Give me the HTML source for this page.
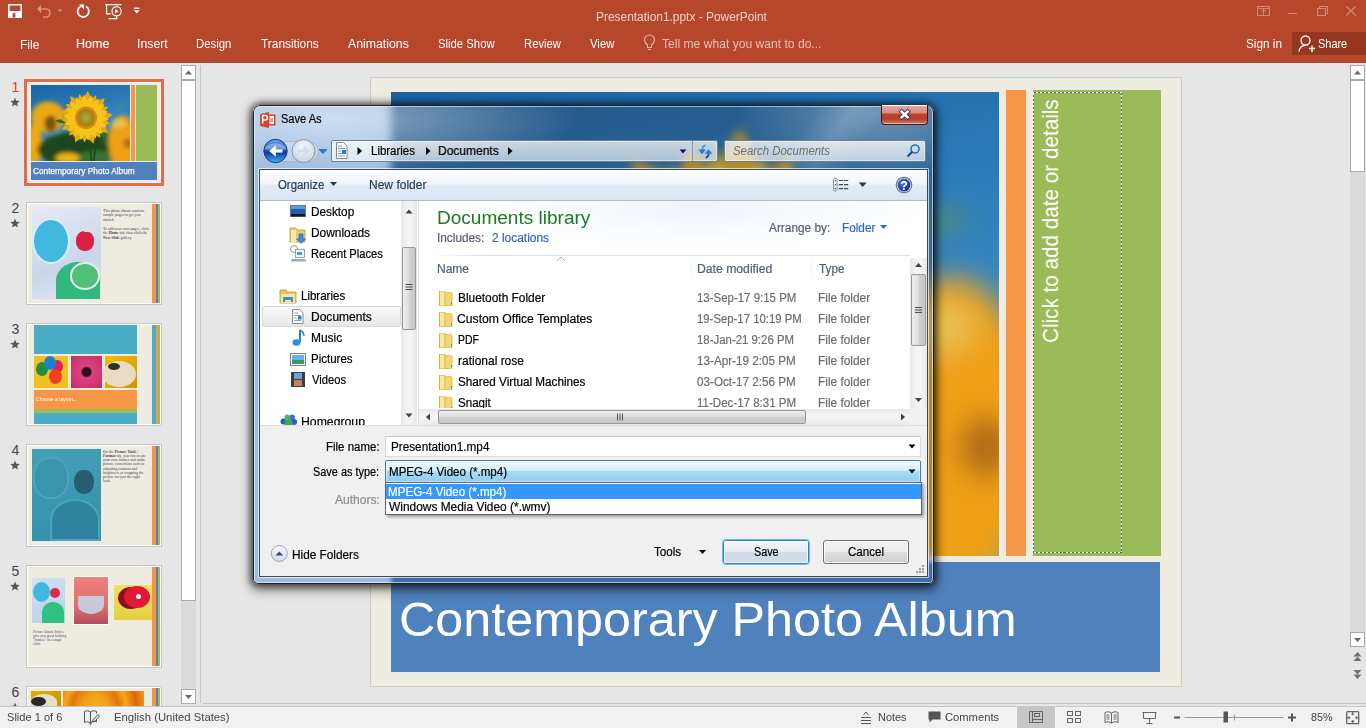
<!DOCTYPE html>
<html><head><meta charset="utf-8">
<style>
*{margin:0;padding:0;box-sizing:border-box}
html,body{width:1366px;height:728px;overflow:hidden;background:#e6e6e6;font-family:"Liberation Sans",sans-serif;position:relative}
.a{position:absolute}
.t{position:absolute;white-space:nowrap;line-height:1;transform-origin:0 0}
svg{position:absolute;overflow:visible}
#title{left:0;top:0;width:1366px;height:63px;background:#b7472a}
.tab{color:#fff;font-size:12.5px;top:37.6px}
.dt{font-size:12px;color:#000;-webkit-text-stroke:.2px currentColor}
</style></head><body>
<!-- TITLE BAR -->
<div id="title" class="a">
  <!-- QAT -->
  <svg style="left:0;top:0" width="150" height="24">
    <g fill="none" stroke="#fff" stroke-width="1.6">
      <path d="M8.8 4.8h12.4v12.4H8.8z"/>
    </g>
    <rect x="9" y="11" width="12" height="6.5" fill="#fff"/>
    <rect x="12.6" y="13.2" width="2.8" height="4.4" fill="#b7472a"/>
    <g fill="none" stroke="#d9907d" stroke-width="1.6">
      <path d="M39 9h7a4 4 0 0 1 0 8h-3"/>
    </g>
    <path d="M37 9l4-4v8z" fill="#d9907d"/>
    <path d="M57.5 9.5h5l-2.5 2.5z" fill="#d9907d"/>
    <g fill="none" stroke="#fff" stroke-width="1.8">
      <path d="M80.5 6.5a5.6 5.6 0 1 0 5.5 0"/>
    </g>
    <path d="M79 4.5h5v5z" fill="#fff"/>
    <g fill="none" stroke="#fff" stroke-width="1.2">
      <path d="M105 4.6h16.5M106.6 4.6v9.2h4.2"/>
      <circle cx="116.6" cy="11.3" r="4.6"/>
      <path d="M116.6 15.9v2.6M108.5 18.6h9"/>
    </g>
    <path d="M115.2 9l3.4 2.3-3.4 2.3z" fill="#fff"/>
    <rect x="134" y="7.6" width="5.4" height="1.3" fill="#fff"/><path d="M133.8 10.3h5.8l-2.9 3.3z" fill="#fff"/>
  </svg>
  <div class="t" style="left:596.35px;top:11px;font-size:12.5px;color:#f0d5ce;transform:scaleX(0.9534)">Presentation1.pptx - PowerPoint</div>
  <!-- window controls -->
  <svg style="left:1250px;top:0" width="116" height="24">
    <g fill="none" stroke="#d28a76" stroke-width="1">
      <rect x="7.5" y="6.5" width="12" height="9"/>
      <path d="M7.5 8.5h12M13.5 9.5v6M11.5 11.5l2-2 2 2"/>
      <path d="M38 13.5h9"/>
      <rect x="67.5" y="8.5" width="8" height="7"/>
      <path d="M69.5 8.5v-2h8v7h-2"/>
      <path d="M96.5 6.5l9 9M105.5 6.5l-9 9" stroke-width="1.3"/>
    </g>
  </svg>
  <div class="t tab" style="left:20.00px;top:39.4px;transform:scaleX(0.9600)">File</div>
  <div class="t tab" style="left:76.00px;transform:scaleX(1.0000)">Home</div>
  <div class="t tab" style="left:136.52px;transform:scaleX(0.9833)">Insert</div>
  <div class="t tab" style="left:196.00px;transform:scaleX(0.9103)">Design</div>
  <div class="t tab" style="left:261.00px;transform:scaleX(0.9508)">Transitions</div>
  <div class="t tab" style="left:348.00px;transform:scaleX(0.9839)">Animations</div>
  <div class="t tab" style="left:438.00px;transform:scaleX(0.9048)">Slide Show</div>
  <div class="t tab" style="left:524.00px;transform:scaleX(0.9024)">Review</div>
  <div class="t tab" style="left:590.00px;transform:scaleX(0.9074)">View</div>
  <svg style="left:640px;top:34px" width="20" height="20">
    <g fill="none" stroke="#e5b9ad" stroke-width="1.1">
      <path d="M7.5 13.5v-2.5c-2-1.5-3-3-3-5a5 5 0 0 1 10 0c0 2-1 3.5-3 5v2.5z"/>
      <path d="M8 15.5h3"/>
    </g>
  </svg>
  <div class="t tab" style="left:661.90px;color:#e8c2b8;transform:scaleX(0.9683)">Tell me what you want to do...</div>
  <div class="t tab" style="left:1245.90px;transform:scaleX(0.9395)">Sign in</div>
  <div class="a" style="left:1292px;top:32px;width:74px;height:23px;background:#953621"></div>
  <svg style="left:1298px;top:35px" width="18" height="18">
    <g fill="none" stroke="#fff" stroke-width="1.3">
      <circle cx="7.5" cy="5.5" r="4.5"/>
      <path d="M1 16.5c0.5-4 3-6 6.5-6.2"/>
      <path d="M11 13.5h6M14 10.5v6.5"/>
    </g>
  </svg>
  <div class="t tab" style="left:1318.10px;transform:scaleX(0.8758)">Share</div>
</div>
<!-- LEFT PANEL -->
<div class="a" style="left:181px;top:65px;width:15px;height:639px;background:#dadada"></div>
<div class="a" style="left:181px;top:65px;width:15px;height:15px;background:#fff;border:1px solid #ababab"></div>
<svg style="left:181px;top:65px" width="15" height="15"><path d="M4 9.5h7l-3.5-4z" fill="#666"/></svg>
<div class="a" style="left:181px;top:80px;width:15px;height:521px;background:#fff;border:1px solid #ababab"></div>
<div class="a" style="left:181px;top:689px;width:15px;height:15px;background:#fff;border:1px solid #ababab"></div>
<svg style="left:181px;top:689px" width="15" height="15"><path d="M4 6h7l-3.5 4z" fill="#666"/></svg>
<div class="a" style="left:203px;top:703px;width:1163px;height:1px;background:#c8c8c8"></div>
<!-- numbers -->
<div class="t" style="left:11.5px;top:80px;font-size:14px;color:#d24726">1</div>
<div class="t" style="left:11.5px;top:201px;font-size:14px;color:#444">2</div>
<div class="t" style="left:11.5px;top:322px;font-size:14px;color:#444">3</div>
<div class="t" style="left:11.5px;top:443px;font-size:14px;color:#444">4</div>
<div class="t" style="left:11.5px;top:564px;font-size:14px;color:#444">5</div>
<div class="t" style="left:11.5px;top:685px;font-size:14px;color:#444">6</div>
<svg style="left:0;top:0" width="30" height="728">
  <g fill="#555">
    <path id="star" d="M15 97.5l1.3 3.3 3.5 0.2-2.7 2.2 0.9 3.4-3-1.9-3 1.9 0.9-3.4-2.7-2.2 3.5-0.2z"/>
    <use href="#star" y="121"/><use href="#star" y="242"/><use href="#star" y="363"/><use href="#star" y="484"/><use href="#star" y="605"/>
  </g>
</svg>
<!-- thumb 1 -->
<div class="a" style="left:24px;top:79px;width:140px;height:107px;border:3px solid #e8694a;background:#fff"></div>
<div class="a" style="left:28px;top:83px;width:132px;height:99px;background:#eeece1"></div>
<svg style="left:31px;top:85px" width="99" height="76" viewBox="0 0 608 464" preserveAspectRatio="none"><use href="#photo"/></svg>
<div class="a" style="left:131px;top:85px;width:4px;height:76px;background:#f79646"></div>
<div class="a" style="left:136px;top:85px;width:21px;height:76px;background:#9bbb59"></div>
<div class="a" style="left:31px;top:162px;width:126px;height:18px;background:#4f81bd"></div>
<div class="t" style="left:33px;top:167px;font-size:9px;color:#fff;-webkit-text-stroke:.25px #fff;transform:scaleX(0.92)">Contemporary Photo Album</div>
<!-- thumb 2 -->
<div class="a" style="left:26px;top:202px;width:136px;height:103px;border:1px solid #c6c6c6;background:#fff"></div>
<div class="a" style="left:28px;top:204px;width:132px;height:99px;background:#eeece1"></div>
<div class="a" style="left:32px;top:207px;width:69px;height:92px;background:linear-gradient(160deg,#e6eaf4,#c9d6ea 60%,#dfe6f1)"></div>
<div class="a" style="left:32px;top:218px;width:38px;height:46px;border-radius:50%;border:2px solid #d8eef8;background:#40b8e0;filter:blur(.7px)"></div>
<div class="a" style="left:76px;top:231px;width:18px;height:20px;border-radius:45%;background:#d82040;filter:blur(.6px)"></div><div class="a" style="left:84px;top:220px;width:8px;height:12px;border:1.5px solid #e8d8e0;filter:blur(.4px)"></div>
<div class="a" style="left:56px;top:262px;width:44px;height:37px;border-radius:50% 50% 0 0;background:#30b880;filter:blur(.7px)"></div>
<div class="a" style="left:70px;top:262px;width:30px;height:28px;border-radius:50%;border:2.5px solid #e0ece8;background:#50c078;filter:blur(.5px)"></div>
<div class="a" style="left:103px;top:208.5px;font-family:'Liberation Serif',serif;font-size:3.9px;line-height:4.5px;color:#4a4058;white-space:nowrap">This photo album contains<br>sample pages to get you<br>started.<br><br style="line-height:6px">To add your own pages, click<br>the <b>Home</b> tab, then click the<br><b>New Slide</b> gallery.</div>
<div class="a" style="left:152px;top:204px;width:4px;height:99px;background:#f79646"></div>
<div class="a" style="left:156px;top:204px;width:2px;height:99px;background:#4f81bd"></div>
<div class="a" style="left:158px;top:204px;width:2px;height:99px;background:#9bbb59"></div>
<!-- thumb 3 -->
<div class="a" style="left:26px;top:323px;width:136px;height:103px;border:1px solid #c6c6c6;background:#fff"></div>
<div class="a" style="left:28px;top:325px;width:132px;height:99px;background:#eeece1"></div>
<div class="a" style="left:34px;top:325px;width:103px;height:29px;background:#4bacc6"></div>
<div class="a" style="left:34px;top:356px;width:34px;height:32px;background:#f0c020"></div>
<div class="a" style="left:52px;top:360px;width:11px;height:13px;border-radius:50%;background:#e02050"></div><div class="a" style="left:36px;top:362px;width:12px;height:14px;border-radius:50%;background:#209040"></div>
<div class="a" style="left:44px;top:356px;width:12px;height:14px;border-radius:50%;background:#2080d0"></div>
<div class="a" style="left:49px;top:369px;width:13px;height:15px;border-radius:50%;background:#f04020"></div>
<div class="a" style="left:71px;top:356px;width:31px;height:32px;background:radial-gradient(circle at 50% 50%,#301018 0,#301018 4px,#e04080 6px,#c03068 100%)"></div>
<div class="a" style="left:105px;top:356px;width:32px;height:32px;background:linear-gradient(135deg,#f0c000,#d89000)"></div>
<div class="a" style="left:102px;top:361px;width:34px;height:26px;border-radius:50%;background:#e8dcc0"></div>
<div class="a" style="left:108px;top:363px;width:12px;height:7px;border-radius:50%;background:#303030"></div>
<div class="a" style="left:34px;top:390px;width:103px;height:19px;background:#f79646"></div>
<div class="t" style="left:35.8px;top:395.5px;font-size:6px;color:#fff;transform:scaleX(.85)">Choose a layout...</div>
<div class="a" style="left:37px;top:410.5px;width:62px;height:1px;background:rgba(255,255,255,.6)"></div>
<div class="a" style="left:34px;top:409px;width:103px;height:4px;background:#9bbb59"></div>
<div class="a" style="left:34px;top:413px;width:103px;height:11px;background:#4bacc6"></div>
<div class="a" style="left:152px;top:325px;width:4px;height:99px;background:#4bacc6"></div>
<div class="a" style="left:156px;top:325px;width:2px;height:99px;background:#f79646"></div>
<div class="a" style="left:158px;top:325px;width:2px;height:99px;background:#9bbb59"></div>
<!-- thumb 4 -->
<div class="a" style="left:26px;top:444px;width:136px;height:103px;border:1px solid #c6c6c6;background:#fff"></div>
<div class="a" style="left:28px;top:446px;width:132px;height:99px;background:#eeece1"></div>
<div class="a" style="left:32px;top:449px;width:69px;height:92px;background:linear-gradient(170deg,#44a0b8,#3a98b0 50%,#3090a8)"></div>
<div class="a" style="left:33px;top:457px;width:36px;height:42px;border-radius:45%;border:2px solid #4aa4bc;background:#3a94ac;filter:blur(.6px)"></div>
<div class="a" style="left:74px;top:470px;width:20px;height:24px;border-radius:45%;background:#245e70;filter:blur(.6px)"></div>
<div class="a" style="left:50px;top:499px;width:50px;height:42px;border-radius:50% 50% 0 0;border:2px solid #4aa4bc;background:#2e84a0;filter:blur(.6px)"></div>
<div class="a" style="left:103px;top:450px;font-family:'Liberation Serif',serif;font-size:3.9px;line-height:4.15px;color:#4a4058;white-space:nowrap">On the <b>Picture Tools</b> |<br><b>Format</b> tab, you can create<br>your own frames and make<br>picture corrections such as<br>adjusting contrast and<br>brightness or cropping the<br>picture for just the right<br>look.</div>
<div class="a" style="left:152px;top:446px;width:4px;height:99px;background:#f79646"></div>
<div class="a" style="left:156px;top:446px;width:2px;height:99px;background:#4f81bd"></div>
<div class="a" style="left:158px;top:446px;width:2px;height:99px;background:#9bbb59"></div>
<!-- thumb 5 -->
<div class="a" style="left:26px;top:565px;width:136px;height:103px;border:1px solid #c6c6c6;background:#fff"></div>
<div class="a" style="left:28px;top:567px;width:132px;height:99px;background:#eeece1"></div>
<div class="a" style="left:32px;top:578px;width:33px;height:45px;background:linear-gradient(160deg,#d0e0f0,#b8d0e8)"></div>
<div class="a" style="left:33px;top:582px;width:17px;height:20px;border-radius:50%;background:#40b8e0"></div>
<div class="a" style="left:50px;top:588px;width:10px;height:10px;border-radius:50%;background:#e02848"></div>
<div class="a" style="left:42px;top:602px;width:22px;height:21px;border-radius:50% 50% 0 0;background:#30c080"></div>
<div class="a" style="left:73px;top:576px;width:36px;height:49px;background:#fff"></div>
<div class="a" style="left:74px;top:577px;width:34px;height:47px;background:linear-gradient(#f08080,#e07070 60%,#b05060)"></div>
<div class="a" style="left:78px;top:596px;width:26px;height:18px;border-radius:0 0 50% 50%;background:#c8c8d8"></div>
<div class="a" style="left:114px;top:585px;width:38px;height:35px;background:linear-gradient(#f0e060,#e0d040)"></div>
<div class="a" style="left:118px;top:587px;width:26px;height:22px;border-radius:50%;background:#8a1020"></div>
<div class="a" style="left:124px;top:586px;width:26px;height:22px;border-radius:50%;background:#e01838"></div>
<div class="a" style="left:136px;top:594px;width:5px;height:5px;border-radius:50%;background:#f0f0f0"></div>
<div class="a" style="left:33px;top:629.5px;font-family:'Liberation Serif',serif;font-size:3.7px;line-height:4.3px;color:#4a4870;white-space:nowrap">Picture Quick Styles<br>give you great looking<br>"frames" in a single<br>click.</div>
<div class="a" style="left:152px;top:567px;width:4px;height:99px;background:#f79646"></div>
<div class="a" style="left:156px;top:567px;width:2px;height:99px;background:#4f81bd"></div>
<div class="a" style="left:158px;top:567px;width:2px;height:99px;background:#9bbb59"></div>
<!-- thumb 6 -->
<div class="a" style="left:26px;top:686px;width:136px;height:30px;border:1px solid #c6c6c6;background:#fff"></div>
<div class="a" style="left:28px;top:688px;width:132px;height:28px;background:#eeece1"></div>
<div class="a" style="left:31px;top:691px;width:30px;height:20px;background:linear-gradient(135deg,#e0b000,#c89000)"></div>
<div class="a" style="left:31px;top:694px;width:26px;height:16px;border-radius:50% 50% 0 0;background:#e8dcc8"></div>
<div class="a" style="left:31px;top:697px;width:15px;height:9px;border-radius:50%;background:#282828"></div>
<div class="a" style="left:63px;top:691px;width:81px;height:20px;background:radial-gradient(circle at 40% 80%,#f8b020 0,#f0a018 25%,#e07810 45%,#f8a818 60%,#d86810 80%,#f0a020)"></div>
<div class="a" style="left:152px;top:688px;width:4px;height:20px;background:#f79646"></div>
<div class="a" style="left:156px;top:688px;width:2px;height:20px;background:#4f81bd"></div>
<div class="a" style="left:158px;top:688px;width:2px;height:20px;background:#9bbb59"></div>

<div class="a" style="left:200px;top:65px;width:1px;height:638px;background:#c8c8c8"></div>
<!-- SLIDE -->
<svg width="0" height="0" style="position:absolute;left:0;top:0">
<defs>
<linearGradient id="sky" x1="0" y1="0" x2="0.3" y2="1">
<stop offset="0" stop-color="#1c62a2"/><stop offset="0.5" stop-color="#2f80be"/><stop offset="1" stop-color="#4a98cc"/>
</linearGradient>
<radialGradient id="sfc"><stop offset="0" stop-color="#b8a830"/><stop offset="0.7" stop-color="#a08a20"/><stop offset="1" stop-color="#b07810"/></radialGradient>
<filter id="b1" x="-50%" y="-50%" width="200%" height="200%"><feGaussianBlur stdDeviation="14"/></filter>
<filter id="b2" x="-50%" y="-50%" width="200%" height="200%"><feGaussianBlur stdDeviation="4"/></filter><filter id="b3" x="-50%" y="-50%" width="200%" height="200%"><feGaussianBlur stdDeviation="2.5"/></filter>
<symbol id="photo" viewBox="0 0 608 464">
<rect width="608" height="464" fill="url(#sky)"/>
<g filter="url(#b1)">
<ellipse cx="105" cy="195" rx="105" ry="95" fill="#eaa818"/>
<ellipse cx="120" cy="235" rx="38" ry="50" fill="#7a5010"/>
<ellipse cx="22" cy="360" rx="45" ry="130" fill="#f0a810"/>
<ellipse cx="290" cy="395" rx="250" ry="110" fill="#1e461a"/>
<ellipse cx="400" cy="440" rx="110" ry="40" fill="#3a7034"/>
<ellipse cx="470" cy="330" rx="50" ry="40" fill="#2a5a2a"/>
<ellipse cx="560" cy="345" rx="85" ry="160" fill="#eea012"/><path d="M545 120l40 5-50 20z" fill="#6a9a40"/>
<ellipse cx="540" cy="235" rx="45" ry="28" fill="#e8c050"/><ellipse cx="595" cy="355" rx="28" ry="32" fill="#b06a14"/>
<ellipse cx="225" cy="445" rx="75" ry="30" fill="#f2b418"/>
</g>
<g filter="url(#b2)">
<path d="M355 330l10 134h10l-10-134z" fill="#1e4a18"/>
<path d="M400 300l-20 164h10l22-160z" fill="#1e4a18"/>
<path d="M395 275c30 0 60 10 70 30-30 10-55 5-75-20z" fill="#2a6a28"/>
<path d="M150 215c30-10 55-5 70 15-25 8-50 5-70-15z" fill="#2a6a28"/>
</g>
<g transform="translate(338,200)" filter="url(#b3)">
<g fill="#e8a810"><path d="M-30 -45 Q-40 -102 0 -165 Q40 -102 30 -45z" transform="rotate(4)"/><path d="M-30 -45 Q-40 -93 0 -150 Q40 -93 30 -45z" transform="rotate(24)"/><path d="M-30 -45 Q-40 -102 0 -165 Q40 -102 30 -45z" transform="rotate(44)"/><path d="M-30 -45 Q-40 -93 0 -150 Q40 -93 30 -45z" transform="rotate(64)"/><path d="M-30 -45 Q-40 -102 0 -165 Q40 -102 30 -45z" transform="rotate(84)"/><path d="M-30 -45 Q-40 -93 0 -150 Q40 -93 30 -45z" transform="rotate(104)"/><path d="M-30 -45 Q-40 -102 0 -165 Q40 -102 30 -45z" transform="rotate(124)"/><path d="M-30 -45 Q-40 -93 0 -150 Q40 -93 30 -45z" transform="rotate(144)"/><path d="M-30 -45 Q-40 -102 0 -165 Q40 -102 30 -45z" transform="rotate(164)"/><path d="M-30 -45 Q-40 -93 0 -150 Q40 -93 30 -45z" transform="rotate(184)"/><path d="M-30 -45 Q-40 -102 0 -165 Q40 -102 30 -45z" transform="rotate(204)"/><path d="M-30 -45 Q-40 -93 0 -150 Q40 -93 30 -45z" transform="rotate(224)"/><path d="M-30 -45 Q-40 -102 0 -165 Q40 -102 30 -45z" transform="rotate(244)"/><path d="M-30 -45 Q-40 -93 0 -150 Q40 -93 30 -45z" transform="rotate(264)"/><path d="M-30 -45 Q-40 -102 0 -165 Q40 -102 30 -45z" transform="rotate(284)"/><path d="M-30 -45 Q-40 -93 0 -150 Q40 -93 30 -45z" transform="rotate(304)"/><path d="M-30 -45 Q-40 -102 0 -165 Q40 -102 30 -45z" transform="rotate(324)"/><path d="M-30 -45 Q-40 -93 0 -150 Q40 -93 30 -45z" transform="rotate(344)"/></g>
<g fill="#f6c21a"><path d="M-26 -45 Q-34 -87 0 -140 Q34 -87 26 -45z" transform="rotate(14)"/><path d="M-26 -45 Q-34 -87 0 -140 Q34 -87 26 -45z" transform="rotate(34)"/><path d="M-26 -45 Q-34 -87 0 -140 Q34 -87 26 -45z" transform="rotate(54)"/><path d="M-26 -45 Q-34 -87 0 -140 Q34 -87 26 -45z" transform="rotate(74)"/><path d="M-26 -45 Q-34 -87 0 -140 Q34 -87 26 -45z" transform="rotate(94)"/><path d="M-26 -45 Q-34 -87 0 -140 Q34 -87 26 -45z" transform="rotate(114)"/><path d="M-26 -45 Q-34 -87 0 -140 Q34 -87 26 -45z" transform="rotate(134)"/><path d="M-26 -45 Q-34 -87 0 -140 Q34 -87 26 -45z" transform="rotate(154)"/><path d="M-26 -45 Q-34 -87 0 -140 Q34 -87 26 -45z" transform="rotate(174)"/><path d="M-26 -45 Q-34 -87 0 -140 Q34 -87 26 -45z" transform="rotate(194)"/><path d="M-26 -45 Q-34 -87 0 -140 Q34 -87 26 -45z" transform="rotate(214)"/><path d="M-26 -45 Q-34 -87 0 -140 Q34 -87 26 -45z" transform="rotate(234)"/><path d="M-26 -45 Q-34 -87 0 -140 Q34 -87 26 -45z" transform="rotate(254)"/><path d="M-26 -45 Q-34 -87 0 -140 Q34 -87 26 -45z" transform="rotate(274)"/><path d="M-26 -45 Q-34 -87 0 -140 Q34 -87 26 -45z" transform="rotate(294)"/><path d="M-26 -45 Q-34 -87 0 -140 Q34 -87 26 -45z" transform="rotate(314)"/><path d="M-26 -45 Q-34 -87 0 -140 Q34 -87 26 -45z" transform="rotate(334)"/><path d="M-26 -45 Q-34 -87 0 -140 Q34 -87 26 -45z" transform="rotate(354)"/></g>
<circle r="68" fill="#d88a10"/>
<circle r="54" fill="url(#sfc)"/>
</g>
</symbol>
</defs></svg>
<div class="a" style="left:370px;top:77px;width:812px;height:610px;background:#eeece1;border:1px solid #cfcdc4"></div>
<svg style="left:391px;top:92px" width="608" height="464" viewBox="0 0 608 464"><use href="#photo" width="608" height="464"/></svg>
<div class="a" style="left:1006px;top:90px;width:20px;height:466px;background:#f79646"></div>
<div class="a" style="left:1033px;top:90px;width:128px;height:466px;background:#9bbb59"></div>
<svg style="left:1033px;top:91px" width="90" height="464"><rect x="0.5" y="1.5" width="88" height="460" fill="none" stroke="#fff" stroke-width="1" shape-rendering="crispEdges"/><rect x="0.5" y="1.5" width="88" height="460" fill="none" stroke="#606060" stroke-width="1" stroke-dasharray="2 2" shape-rendering="crispEdges"/></svg>
<div class="t" style="left:1040px;top:343px;font-size:22px;color:#fff;transform:rotate(-90deg) scaleX(0.94)">Click to add date or details</div>
<div class="a" style="left:391px;top:562px;width:769px;height:110px;background:#4f81bd"></div>
<div class="t" style="left:399.08px;top:596px;font-size:47.5px;color:#fff;transform:scaleX(1.0584)">Contemporary Photo Album</div>
<!-- right scrollbar -->
<div class="a" style="left:1350px;top:65px;width:15px;height:582px;background:#dadada"></div>
<div class="a" style="left:1350px;top:65px;width:15px;height:15px;background:#fff;border:1px solid #ababab"></div>
<svg style="left:1350px;top:65px" width="15" height="15"><path d="M4 9.5h7l-3.5-4z" fill="#666"/></svg>
<div class="a" style="left:1350px;top:80px;width:15px;height:92px;background:#fff;border:1px solid #ababab"></div>
<div class="a" style="left:1350px;top:632px;width:15px;height:15px;background:#fff;border:1px solid #ababab"></div>
<svg style="left:1350px;top:632px" width="15" height="15"><path d="M4 6h7l-3.5 4z" fill="#666"/></svg>
<svg style="left:1350px;top:650px" width="15" height="32"><g fill="#707070"><path d="M3.5 6.5l4-4.5 4 4.5zM3.5 11l4-4.5 4 4.5z"/><path d="M3.5 20l4 4.5 4-4.5zM3.5 24.5l4 4.5 4-4.5z"/></g></svg>

<!-- STATUS -->
<div class="a" style="left:0;top:706px;width:1366px;height:22px;background:#f1f1f1;border-top:1px solid #c6c6c6"></div>
<div class="t" style="left:7.30px;top:711.5px;font-size:11.5px;color:#444;transform:scaleX(0.9621)">Slide 1 of 6</div>
<svg style="left:82px;top:709px" width="20" height="17"><g fill="none" stroke="#555" stroke-width="1"><path d="M2.5 2.5c2-1 4-1 6 0.5v11c-2-1.5-4-1.5-6-0.5z"/><path d="M8.5 3c2-1.5 4-1.5 6-0.5v2M14.5 10v3c-2-1-4-1-6 0.5"/><path d="M7.5 13.5l1 2 1-2"/><path d="M11 11l5-5.5 1.5 1.5-5 5.5-2 0.5z"/></g></svg>
<div class="t" style="left:114.3px;top:711.5px;font-size:11.5px;color:#444;transform:scaleX(0.9821)">English (United States)</div>
<svg style="left:858px;top:709px" width="16" height="16"><g stroke="#555" stroke-width="1" fill="none"><path d="M3 8.5h10M3 11.5h10M3 14.5h10M5.5 6l2.5-3 2.5 3"/></g></svg>
<div class="t" style="left:878.00px;top:711.5px;font-size:11.5px;color:#444;transform:scaleX(0.9500)">Notes</div>
<svg style="left:927px;top:709px" width="16" height="16"><path d="M1.5 2.5h12v8h-8l-3 3v-3h-1z" fill="#555"/></svg>
<div class="t" style="left:944.50px;top:711.5px;font-size:11.5px;color:#444;transform:scaleX(0.9727)">Comments</div>
<div class="a" style="left:1017px;top:707px;width:38px;height:21px;background:#c6c6c6"></div>
<svg style="left:1020px;top:707px" width="346" height="21">
<g fill="none" stroke="#666" stroke-width="1">
<rect x="9.5" y="4.5" width="13" height="11"/><path d="M12.5 4.5v11M12.5 12.5h10"/><rect x="14.5" y="6.5" width="5" height="3"/>
<rect x="47.5" y="4.5" width="5" height="4"/><rect x="55.5" y="4.5" width="5" height="4"/><rect x="47.5" y="11.5" width="5" height="4"/><rect x="55.5" y="11.5" width="5" height="4"/>
<path d="M85 5.5c2-1 4.5-1 6.5 0.5c2-1.5 4.5-1.5 6.5-0.5v10c-2-1-4.5-1-6.5 0.5c-2-1.5-4.5-1.5-6.5-0.5zM91.5 6v10M86.5 8h3M86.5 10h3M86.5 12h3M93.5 8h3M93.5 10h3M93.5 12h3"/>
<path d="M122.5 5.5h14M123.5 5.5v6h12v-6M129.5 11.5v5M126.5 16.5h6"/>
<path d="M164.5 10.5h99" stroke="#999"/>
<path d="M214.5 7.5v6" stroke="#999"/>
<rect x="326.7" y="4.7" width="12" height="12" rx="1" stroke-width="1.3"/><path d="M332.7 4.7v3.6M331.2 7h3M332.7 16.7v-3.6M331.2 14.4h3M326.7 10.7h3.6M329 9.2v3M338.7 10.7h-3.6M336.4 9.2v3" stroke-width="1.1"/>
</g>
<rect x="154" y="9.5" width="6" height="2" fill="#555"/>
<rect x="203.5" y="4.5" width="4.5" height="11" fill="#555"/>
<path d="M268 9.5h8v2h-8zM271 6.5h2v8h-2z" fill="#555"/>

</svg>
<div class="t" style="left:1310.80px;top:711.5px;font-size:11.5px;color:#444;transform:scaleX(0.9348)">85%</div>

<!-- DIALOG -->
<!-- shadow & frame -->
<div class="a" style="left:253px;top:105px;width:681px;height:479px;border-radius:7px 7px 5px 5px;box-shadow:0 0 7px 2px rgba(0,0,0,.6),0 4px 12px 2px rgba(0,0,0,.45)"></div>
<div class="a" id="glass" style="left:253px;top:105px;width:681px;height:479px;border-radius:7px 7px 5px 5px;overflow:hidden;background:#a9c8e8">
  <svg style="left:138px;top:-13px;filter:blur(4.5px) saturate(.9) brightness(.85)" width="608" height="464" viewBox="0 0 608 464"><use href="#photo" width="608" height="464"/></svg>
  <div class="a" style="left:138px;top:457px;width:600px;height:30px;background:#3f6ea8;filter:blur(2px)"></div>
  <div class="a" style="left:0;top:0;width:681px;height:479px;background:rgba(60,110,170,.12)"></div>
  <div class="a" style="left:0;top:0;width:330px;height:70px;background:radial-gradient(ellipse at 25% 20%,rgba(255,255,255,.5),rgba(255,255,255,0) 70%)"></div>
  <div class="a" style="left:470px;top:-40px;width:260px;height:120px;background:radial-gradient(ellipse at 60% 40%,rgba(255,255,255,.32),rgba(255,255,255,0) 65%)"></div>
  <div class="a" style="left:545px;top:-60px;width:60px;height:200px;transform:rotate(35deg);background:linear-gradient(90deg,rgba(255,255,255,0),rgba(255,255,255,.15),rgba(255,255,255,0))"></div>
  <div class="a" style="left:0;top:0;width:681px;height:479px;border-radius:7px 7px 5px 5px;border:1px solid #1e2328;box-shadow:inset 0 0 0 1px rgba(255,255,255,.55)"></div>
</div>
<!-- title -->
<svg style="left:259px;top:111px" width="18" height="18">
  <path d="M1 3l9-2v16l-9-2z" fill="#d24726"/>
  <rect x="9" y="3.5" width="7.5" height="11" fill="#d24726"/>
  <rect x="10.5" y="5" width="4.5" height="8" fill="#fff"/>
  <path d="M11 8h3M11 10h3" stroke="#d24726" stroke-width="1"/>
  <path d="M3.6 12.5v-8h2.6a2.2 2.2 0 0 1 0 4.4h-2.6" fill="none" stroke="#fff" stroke-width="1.5"/>
</svg>
<div class="t dt" style="left:281.40px;top:113.4px;transform:scaleX(0.9205)">Save As</div>
<div class="a" style="left:881px;top:105px;width:47px;height:20px;border:1px solid #4a1810;border-top:none;border-radius:0 0 4px 4px;background:linear-gradient(#e8aaa2 0,#d88c84 40%,#c04028 50%,#b8402c 75%,#d07a68 100%);box-shadow:inset 0 1px 0 #fff,inset 0 -1px 0 rgba(255,255,255,.5)"></div>
<svg style="left:881px;top:105px" width="47" height="20"><path d="M20.6 6.6l6 5.6M26.6 6.6l-6 5.6" stroke="#303a58" stroke-width="4.4" stroke-linecap="square"/><path d="M20.6 6.6l6 5.6M26.6 6.6l-6 5.6" stroke="#fff" stroke-width="2.6" stroke-linecap="square"/></svg>
<!-- nav buttons -->
<div class="a" style="left:261px;top:141px;width:58px;height:21px;border-radius:11px;background:rgba(255,255,255,.25);border:1px solid rgba(120,140,160,.35)"></div>
<svg style="left:262px;top:138px" width="70" height="27">
  <defs>
    <linearGradient id="bb" x1="0" y1="0" x2="0" y2="1"><stop offset="0" stop-color="#6aa8ee"/><stop offset="0.45" stop-color="#1e5cc0"/><stop offset="0.55" stop-color="#0a3a9e"/><stop offset="1" stop-color="#3ab4f4"/></linearGradient>
    <radialGradient id="gb" cx="50%" cy="35%" r="65%"><stop offset="0" stop-color="#f4f8fc"/><stop offset="1" stop-color="#c8d4e0"/></radialGradient>
  </defs>
  <circle cx="13.5" cy="13" r="11.7" fill="url(#bb)" stroke="#1c3c6c" stroke-width="1"/>
  <path d="M2.5 11.5a11 6 0 0 1 22 0" fill="rgba(255,255,255,.35)"/>
  <path d="M20.5 13h-8.5" stroke="#fff" stroke-width="3.2" fill="none"/><path d="M13.8 7.2l-6.6 5.8 6.6 5.8z" fill="#fff"/>
  <circle cx="41.5" cy="13" r="11.5" fill="url(#gb)" stroke="#8a96a4" stroke-width="1"/>
  <path d="M36 13h9M41.5 8.5l4.5 4.5-4.5 4.5" stroke="#d6dde6" stroke-width="3" fill="none"/>
  <path d="M57 11.5h8l-4 4z" fill="#2a78c8" stroke="#1a4a8a" stroke-width=".5"/>
</svg>
<!-- address bar -->
<div class="a" style="left:331px;top:140px;width:387px;height:22px;border:1px solid #6f7f90;border-radius:2px;background:linear-gradient(rgba(255,255,255,.75),rgba(255,255,255,.6));box-shadow:inset 0 0 0 1px rgba(255,255,255,.45)"></div>
<div class="a" style="left:692px;top:141px;width:1px;height:20px;background:#8a98a6"></div>
<svg style="left:333px;top:141px" width="18" height="20"><path d="M3.5 1.5h7l3.5 3.5v12.5h-10.5z" fill="#fff" stroke="#7a8a9a"/><path d="M5 5h4M5 7.5h7M5 10h3M5 12.5h7M5 15h7" stroke="#6a7a98" stroke-width=".8"/><rect x="9" y="9" width="4" height="4" fill="#2a80c8"/></svg>
<svg style="left:350px;top:141px" width="170" height="20"><path d="M7.5 6l4.5 4-4.5 4zM76 6l4.5 4-4.5 4zM158 6l4.5 4-4.5 4z" fill="#000"/></svg>
<div class="t dt" style="left:370.64px;top:145px;transform:scaleX(0.9556)">Libraries</div>
<div class="t dt" style="left:438.00px;top:145px;transform:scaleX(1.0000)">Documents</div>
<svg style="left:675px;top:141px" width="45" height="20"><path d="M4.5 8.5h7l-3.5 4z" fill="#0a1a5a"/><path d="M30.5 4.2c-2 .5-3 2-3.2 4.8" fill="none" stroke="#3a9ae8" stroke-width="1.8"/><path d="M23.3 8.6h7.6l-3.8 4.6z" fill="#2a78d0"/><path d="M33.6 12.5c0 2.2-1 3.6-2.8 4.3" fill="none" stroke="#1a48a0" stroke-width="1.8"/><path d="M29.6 12.8h7.8l-3.9-4.6z" fill="#2a78d0"/></svg>
<!-- search -->
<div class="a" style="left:724px;top:140px;width:202px;height:22px;border:1px solid #6f7f90;border-radius:2px;background:linear-gradient(rgba(255,255,255,.78),rgba(255,255,255,.65));box-shadow:inset 0 0 0 1px rgba(255,255,255,.45)"></div>
<div class="t" style="left:732.80px;top:145px;font-size:12px;font-style:italic;color:#6d6d6d;transform:scaleX(0.9500)">Search Documents</div>
<svg style="left:903px;top:141px" width="20" height="20"><circle cx="12" cy="8" r="4" fill="none" stroke="#2a70c0" stroke-width="1.6"/><path d="M9.5 10.5l-5 5" stroke="#1a4a9a" stroke-width="2.2"/></svg>
<!-- inner panel -->
<div class="a" style="left:258px;top:168px;width:671px;height:410px;border:1px solid rgba(255,255,255,.7);border-radius:1px"></div>
<div class="a" style="left:259px;top:169px;width:669px;height:408px;background:#f0f0f0;border:1px solid #3c4858"></div>
<div class="a" style="left:260px;top:170px;width:667px;height:31px;background:linear-gradient(#fbfdff 0,#f1f5fb 47%,#e2eaf5 50%,#dbe5f2 100%);border-bottom:1px solid #a9bbd0"></div>
<div class="t dt" style="left:278.16px;top:178.5px;color:#1e395b;transform:scaleX(0.9505)">Organize</div>
<svg style="left:328px;top:180px" width="12" height="8"><path d="M2 2h7l-3.5 4z" fill="#1e395b"/></svg>
<div class="t dt" style="left:369.20px;top:178.5px;color:#1e395b;transform:scaleX(1.0018)">New folder</div>
<svg style="left:830px;top:174px" width="90" height="24">
  <rect x="3.6" y="4.3" width="3.4" height="12.6" rx="1" fill="#fff" stroke="#6a7a90" stroke-width=".9"/>
  <rect x="4.7" y="5.9" width="1.3" height="1.3" fill="#2a9a3a"/><rect x="4.7" y="10" width="1.3" height="1.3" fill="#e02020"/><rect x="4.7" y="14" width="1.3" height="1.3" fill="#2a5ae0"/>
  <path d="M8.8 6.5h4.2M14 6.5h4.2M8.8 10.6h4.2M14 10.6h4.2M8.8 14.6h4.2M14 14.6h4.2" stroke="#3a4a60" stroke-width="1.1"/>
  <path d="M28.8 8.6h7.8l-3.9 4.4z" fill="#1e395b"/>
  <defs><radialGradient id="hb" cx="40%" cy="35%" r="70%"><stop offset="0" stop-color="#5a8ae0"/><stop offset=".6" stop-color="#2048b0"/><stop offset="1" stop-color="#0a2a88"/></radialGradient></defs>
  <circle cx="74" cy="11" r="7.7" fill="#fff" stroke="#7a7a7a" stroke-width="1.3"/>
  <circle cx="74" cy="11" r="6.4" fill="url(#hb)"/>
  <text x="70.3" y="15.5" font-family="Liberation Sans" font-weight="bold" font-size="12" fill="#fff">?</text>
</svg>
<!-- nav pane -->
<div class="a" style="left:260px;top:201px;width:158px;height:224px;background:#fff"></div>
<div class="a" style="left:418px;top:201px;width:1px;height:224px;background:#d6e5f5"></div>
<div class="a" style="left:401px;top:201px;width:16px;height:224px;background:linear-gradient(90deg,#e8e8e8,#f4f4f4 40%,#f4f4f4 60%,#e8e8e8)"></div>
<svg style="left:401px;top:201px" width="16" height="224"><path d="M4.5 12.5h7l-3.5-4z" fill="#404040"/><path d="M4.5 212.5h7l-3.5 4z" fill="#404040"/></svg>
<div class="a" style="left:402px;top:247px;width:14px;height:83px;border:1px solid #979797;border-radius:2px;background:linear-gradient(90deg,#eeeeee,#dcdcdc 50%,#cfcfcf 51%,#c8c8c8)"></div>
<svg style="left:402px;top:280px" width="14" height="14"><path d="M3.5 4.5h7M3.5 7h7M3.5 9.5h7" stroke="#505050" stroke-width="1"/></svg>
<div class="a" style="left:262px;top:306px;width:139px;height:21px;border:1px solid #d9d9d9;border-radius:2px;background:linear-gradient(#fafafa,#e6e6e6)"></div>
<svg style="left:278px;top:204px;overflow:hidden" width="30" height="221">
  <!-- desktop -->
  <rect x="12.5" y="1.5" width="15" height="11" fill="#2a5ab0" stroke="#6a7890"/><rect x="13" y="10" width="14" height="2.5" fill="#1a1a1a"/><rect x="13" y="2" width="14" height="3" fill="#5a9ae0"/>
  <!-- downloads -->
  <path d="M12 24h6l1 2h8v12h-15z" fill="#e8cc70" stroke="#b89a40" stroke-width=".8"/><path d="M13 26h5v13h-5z" fill="#f8e8a8"/><path d="M21 30v5h-2.5l4.5 4.5 4.5-4.5h-2.5v-5z" fill="#3a90e0" stroke="#1a60b0" stroke-width=".6"/>
  <!-- recent -->
  <circle cx="16" cy="45" r="3.5" fill="#fff" stroke="#808080" stroke-width=".8"/><rect x="17.5" y="45.5" width="9" height="8" fill="#eef4fa" stroke="#8090a0" stroke-width=".8"/><path d="M14 55h13l1.5 2.5h-16z" fill="#a0a8b0"/><rect x="19" y="48" width="5" height="3" fill="#40a0e0"/>
  <!-- libraries -->
  <path d="M2 86h6l1.5 2h8.5v11h-16z" fill="#e8c85a" stroke="#b89a40" stroke-width=".8"/><path d="M3 90h14v9h-14z" fill="#f8e49a"/><path d="M5 93h10v5h-2v-2h-6v2h-2z" fill="#3a90d8"/>
  <!-- documents -->
  <path d="M14.5 105.5h7l3.5 3.5v10.5h-10.5z" fill="#fff" stroke="#7a8a9a"/><path d="M16 109h4M16 111.5h7M16 114h3M16 116.5h7" stroke="#6a7a98" stroke-width=".7"/><rect x="20" y="112" width="3.5" height="3.5" fill="#2a80c8"/>
  <!-- music -->
  <path d="M22 126v12" stroke="#2a80d0" stroke-width="2"/><path d="M22 126c2 1 4 3 4 6" stroke="#2a80d0" stroke-width="1.4" fill="none"/><ellipse cx="18.5" cy="138.5" rx="4" ry="3.3" fill="#2a90e0"/>
  <!-- pictures -->
  <rect x="12.5" y="149.5" width="15" height="12" fill="#fff" stroke="#7a8088"/><rect x="14" y="151" width="12" height="5" fill="#6ab0e8"/><rect x="14" y="156" width="12" height="4" fill="#3a9a58"/>
  <!-- videos -->
  <rect x="13" y="168" width="14" height="15" fill="#304050"/><rect x="16" y="169" width="8" height="6" fill="#70a0d0"/><rect x="16" y="176" width="8" height="6" fill="#d08050"/>
  <!-- homegroup -->
  <circle cx="5.5" cy="217.5" r="3" fill="#2a5ac8"/><circle cx="14" cy="213.5" r="3" fill="#3a70d0"/><circle cx="16" cy="218" r="3" fill="#2a5ac8"/><circle cx="10.5" cy="219" r="4" fill="#3aa848"/><circle cx="9" cy="213" r="2.5" fill="#50b858"/>
</svg>
<div class="t dt" style="left:310.91px;top:206.10px;transform:scaleX(0.9814)">Desktop</div>
<div class="t dt" style="left:310.90px;top:227.10px;transform:scaleX(0.9932)">Downloads</div>
<div class="t dt" style="left:310.94px;top:248.10px;transform:scaleX(0.9273)">Recent Places</div>
<div class="t dt" style="left:300.62px;top:290.40px;transform:scaleX(0.9600)">Libraries</div>
<div class="t dt" style="left:311.10px;top:311.20px;transform:scaleX(1.0017)">Documents</div>
<div class="t dt" style="left:311.10px;top:332.20px;transform:scaleX(0.9968)">Music</div>
<div class="t dt" style="left:311.12px;top:353.20px;transform:scaleX(0.9581)">Pictures</div>
<div class="t dt" style="left:312.07px;top:374.00px;transform:scaleX(0.9351)">Videos</div>
<div class="a" style="left:260px;top:405px;width:141px;height:20px;overflow:hidden"><div class="t dt" style="left:40.58px;top:10.60px;transform:scaleX(1.0206)">Homegroup</div></div>
<!-- file list -->
<div class="a" style="left:419px;top:201px;width:508px;height:224px;background:#fff"></div>
<div class="a" style="left:419px;top:201px;width:508px;height:55px;background:radial-gradient(ellipse at 55% 10%,rgba(225,236,248,.55),rgba(255,255,255,0) 60%)"></div>
<div class="t" style="left:437.16px;top:210px;font-size:17.5px;color:#1e7a1e;transform:scaleX(1.0872)">Documents library</div>
<div class="t dt" style="left:437.21px;top:232.4px;color:#5a5e72;transform:scaleX(0.9851)">Includes:</div>
<div class="t dt" style="left:492.00px;top:232.4px;color:#3366cc;transform:scaleX(0.9947)">2 locations</div>
<div class="t dt" style="left:769.20px;top:222px;color:#5a5e72;transform:scaleX(0.9885)">Arrange by:</div>
<div class="t dt" style="left:842.42px;top:222px;color:#3366cc;transform:scaleX(0.9818)">Folder</div>
<svg style="left:878px;top:223px" width="12" height="8"><path d="M2 2h7l-3.5 4z" fill="#3366cc"/></svg>
<div class="a" style="left:430px;top:255px;width:480px;height:1px;background:linear-gradient(90deg,rgba(213,228,242,0),#d5e4f2 10%,#d5e4f2)"></div>
<svg style="left:555px;top:256px" width="12" height="6"><path d="M2 5l4-4 4 4" fill="none" stroke="#9ab8d8" stroke-width="1"/></svg>
<div class="a" style="left:691px;top:258px;width:1px;height:22px;background:linear-gradient(#fff,#e6ecf4 50%,#fff)"></div>
<div class="a" style="left:811px;top:258px;width:1px;height:22px;background:linear-gradient(#fff,#e6ecf4 50%,#fff)"></div>
<div class="t dt" style="left:437.20px;top:262.8px;color:#4c607a;transform:scaleX(0.9968)">Name</div>
<div class="t dt" style="left:697.28px;top:262.8px;color:#4c607a;transform:scaleX(1.0164)">Date modified</div>
<div class="t dt" style="left:818.99px;top:262.8px;color:#4c607a;transform:scaleX(0.9769)">Type</div>
<div class="a" style="left:419px;top:286px;width:491px;height:122px;overflow:hidden">
<svg style="left:19px;top:3.6px" width="16" height="130">
  <g id="fold"><path d="M1 1h6.5v15h-6.5z" fill="#d8b040"/><path d="M7 2h6l1.5 1.5v12.5h-7.5z" fill="#e8c658"/><path d="M2 1.5h4.5v14h-4.5z" fill="#f8e8a0"/><path d="M8 3h5v12h-5z" fill="#f0d878"/><path d="M13.5 12v2.5" stroke="#3a90e0" stroke-width="1"/></g>
  <use href="#fold" y="21"/><use href="#fold" y="42"/><use href="#fold" y="63"/><use href="#fold" y="84"/><use href="#fold" y="105"/>
</svg>
<div class="t dt" style="left:39.00px;top:5.90px;transform:scaleX(0.9909)">Bluetooth Folder</div>
<div class="t dt" style="left:38.49px;top:26.90px;transform:scaleX(1.0135)">Custom Office Templates</div>
<div class="t dt" style="left:38.57px;top:47.90px;transform:scaleX(0.8667)">PDF</div>
<div class="t dt" style="left:38.50px;top:68.90px;transform:scaleX(0.9985)">rational rose</div>
<div class="t dt" style="left:38.51px;top:89.90px;transform:scaleX(0.9762)">Shared Virtual Machines</div>
<div class="t dt" style="left:38.52px;top:110.90px;transform:scaleX(0.9647)">Snagit</div>
<div class="t dt" style="left:277.70px;top:5.90px;color:#6d6d6d;transform:scaleX(0.9544)">13-Sep-17 9:15 PM</div>
<div class="t dt" style="left:277.70px;top:26.90px;color:#6d6d6d;transform:scaleX(0.9455)">19-Sep-17 10:19 PM</div>
<div class="t dt" style="left:277.70px;top:47.90px;color:#6d6d6d;transform:scaleX(0.9505)">18-Jan-21 9:26 PM</div>
<div class="t dt" style="left:277.70px;top:68.90px;color:#6d6d6d;transform:scaleX(0.9733)">13-Apr-19 2:05 PM</div>
<div class="t dt" style="left:277.70px;top:89.90px;color:#6d6d6d;transform:scaleX(0.9733)">03-Oct-17 2:56 PM</div>
<div class="t dt" style="left:277.70px;top:110.90px;color:#6d6d6d;transform:scaleX(0.9612)">11-Dec-17 8:31 PM</div>
<div class="t dt" style="left:399.00px;top:5.90px;color:#6d6d6d;transform:scaleX(0.9904)">File folder</div>
<div class="t dt" style="left:399.00px;top:26.90px;color:#6d6d6d;transform:scaleX(0.9904)">File folder</div>
<div class="t dt" style="left:399.00px;top:47.90px;color:#6d6d6d;transform:scaleX(0.9904)">File folder</div>
<div class="t dt" style="left:399.00px;top:68.90px;color:#6d6d6d;transform:scaleX(0.9904)">File folder</div>
<div class="t dt" style="left:399.00px;top:89.90px;color:#6d6d6d;transform:scaleX(0.9904)">File folder</div>
<div class="t dt" style="left:399.00px;top:110.90px;color:#6d6d6d;transform:scaleX(0.9904)">File folder</div>
</div>
<!-- v scroll -->
<div class="a" style="left:910px;top:258px;width:17px;height:151px;background:linear-gradient(90deg,#e8e8e8,#f4f4f4 40%,#f4f4f4 60%,#e8e8e8)"></div>
<svg style="left:910px;top:258px" width="17" height="151"><path d="M5 9h7l-3.5-4z" fill="#404040"/><path d="M5 140h7l-3.5 4z" fill="#404040"/></svg>
<div class="a" style="left:911px;top:274px;width:15px;height:72px;border:1px solid #979797;border-radius:2px;background:linear-gradient(90deg,#eeeeee,#dcdcdc 50%,#cfcfcf 51%,#c8c8c8)"></div>
<svg style="left:911px;top:303px" width="15" height="14"><path d="M4 4.5h7M4 7h7M4 9.5h7" stroke="#505050" stroke-width="1"/></svg>
<!-- h scroll -->
<div class="a" style="left:419px;top:409px;width:508px;height:16px;background:linear-gradient(#e8e8e8,#f4f4f4 40%,#f4f4f4 60%,#e8e8e8)"></div>
<svg style="left:419px;top:409px" width="508" height="16"><path d="M11 4.5v7l-4-3.5z" fill="#404040"/><path d="M482 4.5v7l4-3.5z" fill="#404040"/></svg>
<div class="a" style="left:438px;top:410px;width:368px;height:14px;border:1px solid #979797;border-radius:2px;background:linear-gradient(#eeeeee,#dcdcdc 50%,#cfcfcf 51%,#c8c8c8)"></div>
<svg style="left:613px;top:410px" width="14" height="14"><path d="M4.5 3.5v7M7 3.5v7M9.5 3.5v7" stroke="#505050" stroke-width="1"/></svg>
<div class="a" style="left:910px;top:409px;width:17px;height:16px;background:#f0f0f0"></div>
<div class="a" style="left:260px;top:425px;width:667px;height:1px;background:#dfdfdf"></div>
<div class="t dt" style="left:326.12px;top:440.7px;transform:scaleX(0.9564)">File name:</div>
<div class="a" style="left:385px;top:436px;width:536px;height:21px;background:#fff;border:1px solid #dadada;border-top-color:#c8c8c8"></div>
<div class="t dt" style="left:391.01px;top:440.7px;transform:scaleX(0.9770)">Presentation1.mp4</div>
<svg style="left:905px;top:440px" width="14" height="12"><path d="M3.5 4.5h7l-3.5 4z" fill="#000"/></svg>
<div class="t dt" style="left:313.25px;top:465.7px;transform:scaleX(0.9097)">Save as type:</div>
<div class="a" style="left:385px;top:460px;width:536px;height:23px;border:1px solid #3c7fb1;border-radius:2px;background:linear-gradient(#f2f9fe 0,#d6effc 45%,#a9dbf6 50%,#8fccef 100%);box-shadow:inset 0 0 0 1px rgba(255,255,255,.5)"></div>
<div class="t dt" style="left:388.81px;top:465.7px;transform:scaleX(0.9639)">MPEG-4 Video (*.mp4)</div>
<svg style="left:905px;top:465px" width="14" height="12"><path d="M3.5 4.5h7l-3.5 4z" fill="#000"/></svg>
<div class="t dt" style="left:335.00px;top:493.6px;color:#8d8d8d;transform:scaleX(1.0045)">Authors:</div>
<div class="a" style="left:385px;top:482px;width:537px;height:33px;background:#fff;border:1px solid #646464;box-shadow:2px 2px 3px rgba(0,0,0,.35)"></div>
<div class="a" style="left:386px;top:484px;width:535px;height:15px;background:#3399ff"></div>
<div class="t dt" style="left:388.21px;top:485.5px;color:#fff;transform:scaleX(0.9664)">MPEG-4 Video (*.mp4)</div>
<div class="t dt" style="left:388.99px;top:501.3px;transform:scaleX(0.9933)">Windows Media Video (*.wmv)</div>
<!-- bottom -->
<svg style="left:270px;top:544px" width="20" height="20">
  <defs><linearGradient id="hf" x1="0" y1="0" x2="0" y2="1"><stop offset="0" stop-color="#fbfcfe"/><stop offset=".5" stop-color="#e6ebf2"/><stop offset="1" stop-color="#d4dce6"/></linearGradient></defs>
  <circle cx="9.3" cy="9.5" r="8" fill="url(#hf)" stroke="#9aa8c0" stroke-width="1"/>
  <path d="M5.5 11.5h7.6l-3.8-4z" fill="#2a4a9a"/>
</svg>
<div class="t dt" style="left:291.61px;top:548.6px;transform:scaleX(0.9836)">Hide Folders</div>
<div class="t dt" style="left:654.18px;top:546.2px;transform:scaleX(0.9690)">Tools</div>
<svg style="left:696px;top:547px" width="14" height="10"><path d="M3 3h7l-3.5 4z" fill="#000"/></svg>
<div class="a" style="left:723px;top:540px;width:86px;height:24px;border:1px solid #3c7fb1;border-radius:3px;background:linear-gradient(#eaf6fd 0,#d9f0fc 45%,#bee6fd 50%,#a7d9f5 100%);box-shadow:0 0 0 1px #5ec4f0,inset 0 0 0 1px #fff"></div>
<div class="a" style="left:724px;top:541px;width:84px;height:22px;border-radius:2px;background:linear-gradient(#f3f6f9 0,#e6ecf2 48%,#d2dce6 52%,#cfdae4 100%);box-shadow:inset 0 0 0 1px rgba(255,255,255,.7)"></div>
<div class="t dt" style="left:754.20px;top:546.2px;transform:scaleX(0.8963)">Save</div>
<div class="a" style="left:823px;top:540px;width:86px;height:24px;border:1px solid #707070;border-radius:3px;background:linear-gradient(#f2f2f2 0,#ebebeb 48%,#dddddd 52%,#cfcfcf 100%);box-shadow:inset 0 0 0 1px rgba(255,255,255,.8)"></div>
<div class="t dt" style="left:848.20px;top:546.2px;transform:scaleX(0.9622)">Cancel</div>
<svg style="left:912px;top:563px" width="14" height="13"><g fill="#a0a0a0"><rect x="10" y="2" width="2" height="2"/><rect x="7" y="5" width="2" height="2"/><rect x="10" y="5" width="2" height="2"/><rect x="4" y="8" width="2" height="2"/><rect x="7" y="8" width="2" height="2"/><rect x="10" y="8" width="2" height="2"/></g></svg>



</body></html>
